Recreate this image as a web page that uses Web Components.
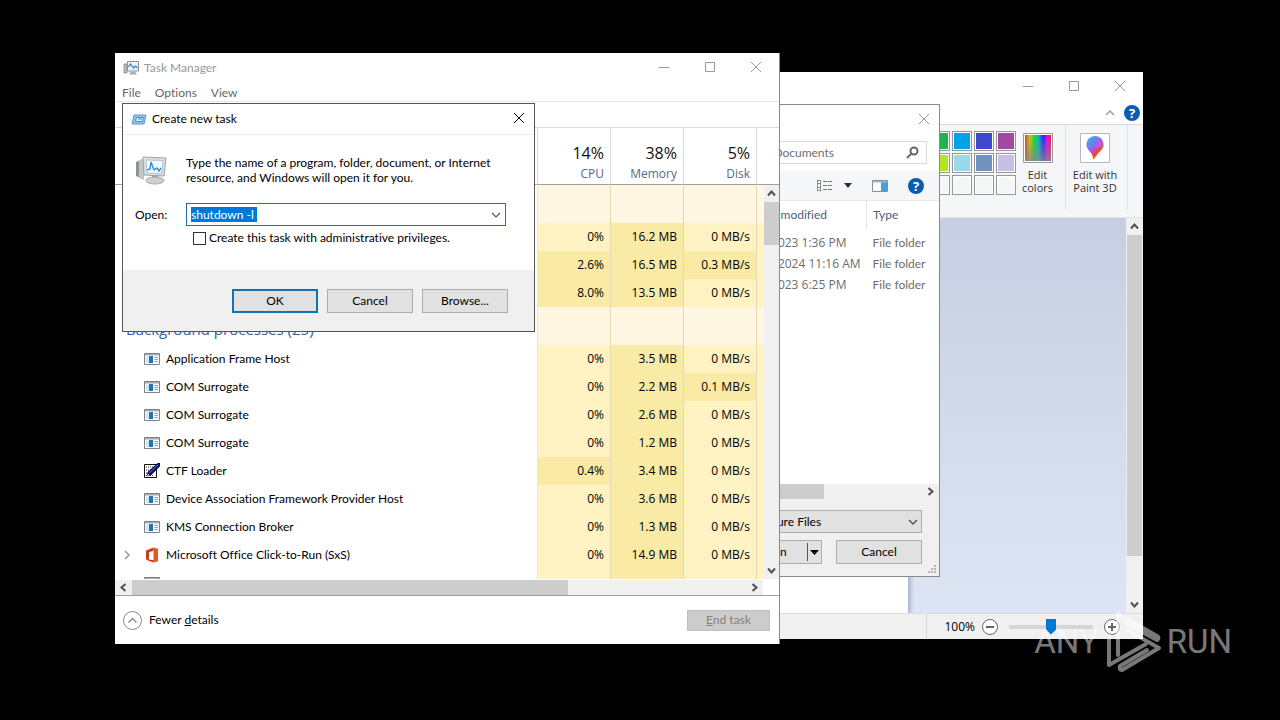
<!DOCTYPE html>
<html lang="en">
<head>
<meta charset="utf-8">
<meta name="viewport" content="width=device-width, initial-scale=1">
<title>Desktop</title>
<style>
  body {
    margin: 0;
    background: #000;
    font: 12px/16px Lato, "Open Sans", sans-serif;
    font-variant-ligatures: none;
    color: #000;
  }
  /* free-floating windows on the desktop */
  paint-app { top: 72px; left: 300px; right: 137px; bottom: 81px; }
  open-dialog { top: 104px; left: 360px; right: 340px; bottom: 143px; }
  task-manager { top: 53px; left: 115px; right: 500px; bottom: 76px; }
  create-task { top: 103px; left: 122px; right: 745px; }
  any-run-mark { right: 48px; bottom: 46px; }
</style>
</head>
<body>
<desk-top>
  <paint-app></paint-app>
  <open-dialog></open-dialog>
  <task-manager></task-manager>
  <create-task></create-task>
  <any-run-mark></any-run-mark>
</desk-top>

<script>
class DeskTop extends HTMLElement {
  connectedCallback() {
    this.attachShadow({ mode: 'open' });
    this.shadowRoot.innerHTML = `
      <style>
        :host { display: block; position: relative; height: 100vh; overflow: hidden; background: #000; }
        ::slotted(*) { position: absolute; }
      </style>
      <slot></slot>
    `;
  }
}
customElements.define('desk-top', DeskTop);

// Title bar with caption buttons. controls="all" adds minimise and maximise.
class TitleBar extends HTMLElement {
  connectedCallback() {
    const all = this.getAttribute('controls') === 'all';
    this.attachShadow({ mode: 'open' });
    this.shadowRoot.innerHTML = `
      <style>
        :host { display: flex; align-items: center; height: 30px; flex: none; background: #fff; color: #999; }
        .name { display: flex; align-items: center; gap: 5px; flex: 1; padding-left: 8px; }
        button { align-self: flex-start; width: 46px; height: 28px; padding: 0; border: 0; background: none; color: inherit; display: grid; place-items: center; }
        :host([active]) { color: #000; }
        :host([compact]) button { width: 30px; }
        svg { width: 12px; height: 12px; fill: none; stroke: currentColor; }
      </style>
      <div class="name"><slot name="icon"></slot><slot></slot></div>
      ${all ? `
        <button aria-label="Minimize"><svg viewBox="0 0 12 12"><path d="M1 6.5h10"/></svg></button>
        <button aria-label="Maximize"><svg viewBox="0 0 12 12"><path d="M1.500 1.500h9v9h-9z"/></svg></button>` : ''}
      <button aria-label="Close"><svg viewBox="0 0 12 12"><path d="M1 1l10 10M11 1L1 11"/></svg></button>
    `;
  }
}
customElements.define('title-bar', TitleBar);

// --size is the length of the thumb as a share of the track
class ScrollBar extends HTMLElement {
  connectedCallback() {
    const across = this.hasAttribute('horizontal');
    this.attachShadow({ mode: 'open' });
    this.shadowRoot.innerHTML = `
      <style>
        :host { display: flex; flex-direction: column; width: 15px; flex: none; background: #f0f0f0; }
        :host([horizontal]) { flex-direction: row; width: auto; height: 15px; }
        button { width: 15px; height: 17px; padding: 0; border: 0; background: none; display: grid; place-items: center; flex: none; }
        :host([horizontal]) button { width: 17px; height: 15px; }
        .track { flex: 1; min-width: 0; min-height: 0; }
        .thumb { background: #cdcdcd; height: var(--size); }
        :host([horizontal]) .thumb { height: 100%; width: var(--size); }
        svg { width: 9px; height: 9px; fill: none; stroke: #505050; stroke-width: 2; }
      </style>
      <button aria-label="Back"><svg viewBox="0 0 9 9"><path d="${across ? 'M6.500 1L2.500 4.500l4 3.500' : 'M1 6.500l3.500-4L8 6.500'}"/></svg></button>
      <div class="track"><div class="thumb"></div></div>
      <button aria-label="Forward"><svg viewBox="0 0 9 9"><path d="${across ? 'M2.500 1l4 3.500-4 3.500' : 'M1 2.500l3.500 4L8 2.500'}"/></svg></button>
    `;
  }
}
customElements.define('scroll-bar', ScrollBar);

class PushButton extends HTMLElement {
  connectedCallback() {
    this.attachShadow({ mode: 'open' });
    this.shadowRoot.innerHTML = `
      <style>
        :host { display: block; width: 86px; flex: none; }
        button { width: 100%; height: 24px; padding: 0; border: 1px solid #adadad; background: #e1e1e1; font: inherit; color: #000; }
        :host([default]) button { border: 2px solid #1272b8; }
        button:disabled { height: 21px; border-color: #bfbfbf; background: #ccc; color: #838383; }
      </style>
      <button ${this.hasAttribute('disabled') ? 'disabled' : ''}><slot></slot></button>
    `;
  }
}
customElements.define('push-button', PushButton);

class HelpButton extends HTMLElement {
  connectedCallback() {
    this.attachShadow({ mode: 'open' });
    this.shadowRoot.innerHTML = `
      <style>
        :host { display: block; }
        button { display: block; width: 16px; height: 16px; padding: 0; border: 0; border-radius: 50%; background: #0a5cb0; color: #fff; font: bold 13px/16px "Open Sans", sans-serif; }
      </style>
      <button aria-label="Help">?</button>
    `;
  }
}
customElements.define('help-button', HelpButton);

class PaintApp extends HTMLElement {
  connectedCallback() {
    const colors = [
      '#22b14c', '#00a2e8', '#3f48cc', '#a349a4',
      '#b5e61d', '#99d9ea', '#7092be', '#c8bfe7',
      '#f5f6f7', '#f5f6f7', '#f5f6f7', '#f5f6f7'
    ];
    this.attachShadow({ mode: 'open' });
    this.shadowRoot.innerHTML = `
      <style>
        :host { display: flex; flex-direction: column; background: #fff; color: #444; }
        .tabs { display: flex; justify-content: flex-end; align-items: center; gap: 9px; height: 22px; padding-right: 3px; border-bottom: 1px solid #dadbdc; }
        .tabs svg { width: 10px; height: 8px; fill: none; stroke: #a0a0a0; stroke-width: 1.5; }
        .tabs button { display: flex; padding: 0; border: 0; background: none; }
        .ribbon { display: flex; justify-content: flex-end; height: 93px; box-sizing: border-box; padding-right: 15px; background: #f5f6f7; border-bottom: 1px solid #dfe3e8; }
        .swatches { display: grid; grid-template-columns: repeat(4, 20px); grid-auto-rows: 20px; gap: 2px; padding-top: 6px; align-content: start; }
        .swatches button { padding: 0; border: 1px solid #979797; box-shadow: inset 0 0 0 1px #fff; }
        .tool { display: flex; flex-direction: column; align-items: center; gap: 5px; margin: 0; padding: 8px 0 0; border: 0; background: none; font: 11px/13px "Open Sans", sans-serif; color: #333; text-align: center; }
        .edit { width: 43px; }
        .p3d { width: 58px; margin-right: 3px; }
        .tool svg { width: 30px; height: 30px; }
        .rule { width: 1px; height: 84px; background: #e0e2e4; }
        .rule.first { margin-left: 6px; }
        .work { flex: 1; min-height: 0; display: flex; }
        .view { flex: 1; display: flex; background: linear-gradient(#c8cee1, #dde5f5); }
        .sheet { flex: 1; margin-right: 218px; background: #fff; box-shadow: 2px 2px 5px #9aa5c6; clip-path: inset(0 -8px 0 0); }
        .bars { display: flex; background: #f0f0f0; padding: 0 1px; }
        .status { display: flex; align-items: center; justify-content: flex-end; gap: 7px; height: 26px; box-sizing: border-box; padding-right: 23px; background: #f0f0f0; border-top: 1px solid #dcdcdc; color: #000; font-family: "Open Sans", sans-serif; }
        .status .line { align-self: stretch; width: 1px; background: #d8d8d8; margin-right: 10px; }
        .round { width: 16px; height: 16px; padding: 0; border: 0; background: none; }
        .round svg { display: block; width: 16px; height: 16px; fill: #fff; stroke: #666; }
        input { appearance: none; width: 84px; height: 18px; margin: 0 4px; background: linear-gradient(#d6d6d6, #d6d6d6) center / 100% 4px no-repeat; }
        input::-webkit-slider-thumb { appearance: none; width: 10px; height: 16px; background: #0078d7; clip-path: polygon(0 0, 100% 0, 100% 70%, 50% 100%, 0 70%); }
      </style>
      <title-bar controls="all"></title-bar>
      <div class="tabs">
        <button aria-label="Minimize the Ribbon"><svg viewBox="0 0 10 8"><path d="M1 6l4-4 4 4"/></svg></button>
        <help-button></help-button>
      </div>
      <div class="ribbon">
        <div class="swatches">
          ${colors.map(c => `<button aria-label="${c}" style="background: ${c}"></button>`).join('')}
        </div>
        <button class="tool edit">
          <svg viewBox="0 0 30 30">
            <defs>
              <linearGradient id="hue"><stop stop-color="#e33"/><stop offset=".18" stop-color="#cc0"/><stop offset=".36" stop-color="#1d3"/><stop offset=".52" stop-color="#0bc"/><stop offset=".7" stop-color="#22f"/><stop offset=".86" stop-color="#e0e"/><stop offset="1" stop-color="#f14"/></linearGradient>
              <linearGradient id="fade" x2="0" y2="1"><stop stop-color="#888" stop-opacity="0"/><stop offset="1" stop-color="#888" stop-opacity=".8"/></linearGradient>
            </defs>
            <path d="M.5.5h29v29H.5z" fill="#fff" stroke="#999"/>
            <path d="M2 2h26v26H2z" fill="url(#hue)"/><path d="M2 2h26v26H2z" fill="url(#fade)"/>
          </svg>
          <span>Edit<br>colors</span>
        </button>
        <div class="rule first"></div>
        <button class="tool p3d">
          <svg viewBox="0 0 30 30">
            <defs>
              <linearGradient id="drop" x1="0" y1="0" x2=".7" y2="1"><stop stop-color="#2bc4f3"/><stop offset=".4" stop-color="#6b7df0"/><stop offset=".58" stop-color="#b94fd8"/><stop offset=".75" stop-color="#f0432f"/><stop offset="1" stop-color="#ffb000"/></linearGradient>
            </defs>
            <path d="M.5.5h29v29H.5z" fill="#fff" stroke="#b8b8b8"/>
            <path d="M15 3c5 0 8.500 4 8.500 8.500 0 4-2.500 6-5 8.500-2 2-2.500 4.500-5.500 6.500 0-3-.5-4.500-2-6.500-2-2.500-4.500-4.500-4.500-8.500C6.500 7 10 3 15 3z" fill="url(#drop)"/>
            <path d="M17 4c4 1 6 4.500 6 8-1 3-4 4-6 3-3-2-3-8 0-11z" fill="#a66bea" opacity=".6"/>
          </svg>
          <span>Edit with<br>Paint 3D</span>
        </button>
        <div class="rule"></div>
      </div>
      <div class="work">
        <div class="view"><div class="sheet"></div></div>
        <div class="bars"><scroll-bar style="--size: 89%"></scroll-bar></div>
      </div>
      <div class="status">
        <div class="line"></div>
        <label for="zoom">100%</label>
        <button class="round" aria-label="Zoom out"><svg viewBox="0 0 16 16"><circle cx="8" cy="8" r="7.500"/><path d="M4 8h8" stroke-width="2"/></svg></button>
        <input id="zoom" type="range" min="0" max="100" value="50">
        <button class="round" aria-label="Zoom in"><svg viewBox="0 0 16 16"><circle cx="8" cy="8" r="7.500"/><path d="M4 8h8M8 4v8" stroke-width="2"/></svg></button>
      </div>
    `;
  }
}
customElements.define('paint-app', PaintApp);

class OpenDialog extends HTMLElement {
  connectedCallback() {
    this.attachShadow({ mode: 'open' });
    this.shadowRoot.innerHTML = `
      <style>
        :host { display: flex; flex-direction: column; box-sizing: border-box; border: 1px solid #8a8a8a; background: #fff; }
        .search { display: flex; justify-content: flex-end; padding: 6px 12px 7px; }
        .box { display: flex; align-items: center; width: 200px; height: 23px; box-sizing: border-box; border: 1px solid #d9d9d9; padding: 0 7px; }
        .box input { flex: 1; min-width: 0; padding: 0; border: 0; outline: 0; background: none; font: inherit; }
        .box input::placeholder { color: #6d6d6d; }
        .box svg { width: 13px; height: 13px; fill: none; stroke: #666; stroke-width: 2; }
        .tools { display: flex; align-items: center; justify-content: flex-end; height: 29px; padding-right: 15px; background: #f5f6f7; border-bottom: 1px solid #e8e8e8; }
        .tools button { display: flex; align-items: center; gap: 10px; padding: 0; border: 0; background: none; margin-right: 20px; }
        table { width: 100%; table-layout: fixed; border-collapse: collapse; color: #6d6d6d; }
        th { height: 27px; padding: 0 0 0 6px; border-left: 1px solid #e5e5e5; font-weight: normal; text-align: left; color: #4c607a; }
        thead th:first-child { border: 0; }
        td { height: 21px; padding: 0 0 0 6px; white-space: nowrap; }
        td:nth-child(2) { padding-left: 3px; font-family: "Open Sans", sans-serif; }
        .date { width: 114px; }
        .type { width: 66px; }
        thead::after { content: ""; display: block; height: 4px; }
        .list { flex: 1; min-height: 0; overflow: hidden; }
        .foot { display: flex; flex-direction: column; gap: 7px; padding: 11px 17px 12px; background: #f0f0f0; }
        .row { display: flex; justify-content: flex-end; gap: 14px; }
        select { appearance: none; width: 187px; height: 23px; padding: 0 4px; border: 1px solid #adadad; border-radius: 0; background: #e1e1e1; color: #000; font: inherit; }
        .pick { position: relative; }
        .pick svg { position: absolute; right: 4px; top: 8px; width: 10px; height: 8px; fill: none; stroke: #555; stroke-width: 1.500; pointer-events: none; }
        .split { display: flex; width: 86px; height: 24px; box-sizing: border-box; border: 1px solid #adadad; background: #e1e1e1; }
        .split button { flex: 1; padding: 0; border: 0; background: none; font: inherit; color: #000; }
        .split .more { flex: none; width: 14px; margin: 2px 0; border-left: 1px solid #555; display: grid; place-items: center; }
        .more svg { width: 9px; height: 5px; }
        .grip { position: absolute; right: 2px; bottom: 2px; width: 9px; height: 9px; fill: #b5b5b5; }
      </style>
      <title-bar compact></title-bar>
      <div class="search">
        <div class="box">
          <input type="text" placeholder="Search Documents" aria-label="Search Documents">
          <svg viewBox="0 0 13 13"><circle cx="8" cy="5" r="3.500"/><path d="M5.500 7.500L1 12"/></svg>
        </div>
      </div>
      <div class="tools">
        <button aria-label="Change your view">
          <svg width="18" height="13" viewBox="0 0 18 13" fill="none" stroke="#777"><path d="M1.500 1v11M4.500 1v11M1 1.500h4M1 4.500h4M1 8.500h4M1 11.500h4" stroke-width=".8"/><path d="M7 2.500h4M12 2.500h4M7 6.500h4M12 6.500h4M7 10.500h4M12 10.500h4"/></svg>
          <svg width="8" height="5" viewBox="0 0 8 5"><path d="M0 0h8L4 5z" fill="#1e2d4a"/></svg>
        </button>
        <button aria-label="Preview pane">
          <svg width="16" height="12" viewBox="0 0 16 12"><path d="M.5.5h15v11H.5z" fill="#fff" stroke="#7f8fa3"/><path d="M9 2h6v9H9z" fill="#4aa0dc"/><path d="M1 1h14v1.500H1z" fill="#a9b9c9"/></svg>
        </button>
        <help-button></help-button>
      </div>
      <div class="list">
        <table>
          <thead><tr><th></th><th class="date">Date modified</th><th class="type">Type</th></tr></thead>
          <tbody>
            <tr><td></td><td>5/3/2023 1:36 PM</td><td>File folder</td></tr>
            <tr><td></td><td>1/23/2024 11:16 AM</td><td>File folder</td></tr>
            <tr><td></td><td>5/3/2023 6:25 PM</td><td>File folder</td></tr>
          </tbody>
        </table>
      </div>
      <scroll-bar horizontal style="--size: 82%"></scroll-bar>
      <div class="foot">
        <div class="row">
          <div class="pick">
            <select aria-label="File type"><option>All Picture Files</option></select>
            <svg viewBox="0 0 10 8"><path d="M1 2l4 4 4-4"/></svg>
          </div>
        </div>
        <div class="row">
          <div class="split">
            <button>Open</button>
            <button class="more" aria-label="More open options"><svg viewBox="0 0 9 5"><path d="M0 0h9L4.500 5z"/></svg></button>
          </div>
          <push-button>Cancel</push-button>
        </div>
      </div>
      <svg class="grip" viewBox="0 0 9 9"><path d="M6 0h2v2H6zM3 3h2v2H3zM6 3h2v2H6zM0 6h2v2H0zM3 6h2v2H3zM6 6h2v2H6z"/></svg>
    `;
  }
}
customElements.define('open-dialog', OpenDialog);

class AppIcon extends HTMLElement {
  connectedCallback() {
    const icons = {
      exe: `<path d="M.5 2.500h15v11H.5z" fill="#fff" stroke="#7a8288"/><path d="M1 3h14v1.500H1z" fill="#a5adb3"/><path d="M2 6h3v6H2z" fill="#cfe6f5"/><path d="M5 5h4v7H5z" fill="#1f74b5"/><path d="M10.500 6.500h3.500M10.500 8.500h3.500M10.500 10.500h3.500" stroke="#7ba3c4"/>`,
      ctf: `<path d="M.5 1.500h12v13H.5z" fill="#fff" stroke="#111"/><path d="M2 4h9M2 7h7M2 10h5M2 12.500h8" stroke="#333" stroke-dasharray="1 1"/><path d="M3 13l1-4L14 0h2v3L7 12z" fill="#0a1278" stroke="#000" stroke-width=".6"/><path d="M5 10l9-8" stroke="#5a6be0"/><path d="M3 13l1-2 1.500 1.200z" fill="#fff"/>`,
      office: `<path d="M9.500.5L2 3.500v9.200l3-1.500V5.200l4.500-1.400z" fill="#c8401a"/><path d="M9.500.5l4.500 1.300v12.400l-4.500 1.300z" fill="#ea5426"/><path d="M2 12.700l7.500 2.800v-2.300L5 12.600v-1.400z" fill="#d92c12"/>`
    };
    this.attachShadow({ mode: 'open' });
    this.shadowRoot.innerHTML = `
      <style>
        :host { display: block; width: 16px; height: 16px; flex: none; }
        svg { display: block; }
      </style>
      <svg width="16" height="16" viewBox="0 0 16 16">${icons[this.getAttribute('kind')]}</svg>
    `;
  }
}
customElements.define('app-icon', AppIcon);

class TaskManager extends HTMLElement {
  connectedCallback() {
    // [icon, name, cpu, memory, disk]
    const apps = [
      ['', '', '0%', '16.2 MB', '0 MB/s'],
      ['', '', '2.6%', '16.5 MB', '0.3 MB/s'],
      ['', '', '8.0%', '13.5 MB', '0 MB/s']
    ];
    const background = [
      ['exe', 'Application Frame Host', '0%', '3.5 MB', '0 MB/s'],
      ['exe', 'COM Surrogate', '0%', '2.2 MB', '0.1 MB/s'],
      ['exe', 'COM Surrogate', '0%', '2.6 MB', '0 MB/s'],
      ['exe', 'COM Surrogate', '0%', '1.2 MB', '0 MB/s'],
      ['ctf', 'CTF Loader', '0.4%', '3.4 MB', '0 MB/s'],
      ['exe', 'Device Association Framework Provider Host', '0%', '3.6 MB', '0 MB/s'],
      ['exe', 'KMS Connection Broker', '0%', '1.3 MB', '0 MB/s'],
      ['office', 'Microsoft Office Click-to-Run (SxS)', '0%', '14.9 MB', '0 MB/s'],
      ['exe', '', '', '', '']
    ];
    const busy = v => (parseFloat(v) > 0 ? 'hot' : '');
    const row = ([icon, name, cpu, mem, disk]) => `
      <tr>
        <td class="name"><div>
          <span class="arrow">${icon === 'office' ? '<svg width="7" height="10" viewBox="0 0 7 10"><path d="M1 1l4 4-4 4" fill="none" stroke="#999" stroke-width="1.500"/></svg>' : ''}</span>
          ${icon ? `<app-icon kind="${icon}"></app-icon>` : ''}${name}
        </div></td>
        <td class="${busy(cpu)}">${cpu}</td><td class="hot">${mem}</td><td class="${busy(disk)}">${disk}</td><td></td>
      </tr>`;
    const group = name => `<tr class="group"><td class="name">${name}</td><td></td><td></td><td></td><td></td></tr>`;

    this.attachShadow({ mode: 'open' });
    this.shadowRoot.innerHTML = `
      <style>
        :host { display: flex; flex-direction: column; box-sizing: border-box; background: #fff; border-right: 1px solid #8a8a8a; }
        nav { display: flex; gap: 14px; height: 17px; padding: 1px 7px 0; border-bottom: 1px solid #e6e6e6; }
        nav button { padding: 0; border: 0; background: none; font: inherit; color: #666; }
        .tabs { height: 25px; border-bottom: 1px solid #d9d9d9; flex: none; }
        .main { flex: 1; min-height: 0; display: grid; grid-template-columns: 1fr 15px; grid-template-rows: 57px 1fr; }
        .list { grid-row: 1 / 3; overflow: hidden; }
        .main scroll-bar { grid-column: 2; }
        .corner { border-bottom: 1px solid #9f9f9f; }
        table { width: 100%; table-layout: fixed; border-collapse: separate; border-spacing: 0; font-family: "Open Sans", sans-serif; }
        th, td { box-sizing: border-box; padding: 0 6px 0 0; text-align: right; font-weight: normal; white-space: nowrap; border-right: 1px solid #e3d9ae; }
        th { height: 57px; border-right-color: #dcdcdc; border-bottom: 1px solid #9f9f9f; color: #5a6987; line-height: 20px; vertical-align: bottom; }
        th b { display: block; font-weight: normal; font-size: 16px; color: #111; line-height: 21px; }
        th:last-child, td:last-child { border-right: 0; padding: 0; }
        td { height: 28px; background: #fff3c4; }
        td.hot { background: #f9eba5; }
        td.name { background: #fff; text-align: left; border-right: 1px solid #f0e6bd; font-family: Lato, sans-serif; }
        td.name div { display: flex; align-items: center; gap: 6px; }
        .arrow { width: 14px; padding-left: 9px; flex: none; line-height: 10px; }
        .group td { height: 38px; background: #fff7e1; }
        .group td.name { padding: 6px 0 0 11px; background: #fff; font: 15px/20px "Open Sans", sans-serif; color: #31609f; }
        .num { width: 73px; }
        .rest { width: 7px; }
        .side { padding-right: 16px; padding-top: 1px; border-bottom: 1px solid #9f9f9f; }
        footer { display: flex; align-items: center; justify-content: space-between; height: 48px; padding: 0 9px 0 8px; }
        footer button { display: flex; align-items: center; gap: 7px; padding: 0; border: 0; background: none; font: inherit; }
        footer push-button { width: 83px; }
      </style>
      <title-bar controls="all">
        <svg slot="icon" width="16" height="16" viewBox="0 0 16 16"><path d="M1 4h3v9H1z" fill="#b9bdc2" stroke="#85898e" stroke-width=".8"/><path d="M4.500 1.500h11v9.500h-11z" fill="#e6f3fc" stroke="#8d9399"/><path d="M5.500 7l2-3 3 4 2-2 2 2" fill="none" stroke="#2a83c4" stroke-width="1.200"/><path d="M8 11.500h4l2 3H6z" fill="#a9adb2"/></svg>
        Task Manager
      </title-bar>
      <nav><button>File</button><button>Options</button><button>View</button></nav>
      <div class="tabs"></div>
      <div class="main">
        <div class="list">
          <table>
            <thead><tr>
              <th></th>
              <th class="num"><b>14%</b>CPU</th>
              <th class="num"><b>38%</b>Memory</th>
              <th class="num"><b>5%</b>Disk</th>
              <th class="rest"></th>
            </tr></thead>
            <tbody>
              ${group('')}
              ${apps.map(row).join('')}
              ${group('Background processes (25)')}
              ${background.map(row).join('')}
            </tbody>
          </table>
        </div>
        <div class="corner"></div>
        <scroll-bar style="--size: 12%"></scroll-bar>
      </div>
      <div class="side"><scroll-bar horizontal style="--size: 71%"></scroll-bar></div>
      <footer>
        <button>
          <svg width="19" height="19" viewBox="0 0 19 19" fill="none" stroke="#888"><circle cx="9.500" cy="9.500" r="9"/><path d="M5.500 11.500l4-4 4 4" stroke-width="1.300"/></svg>
          <span>Fewer <u>d</u>etails</span>
        </button>
        <push-button disabled><u>E</u>nd task</push-button>
      </footer>
    `;
  }
}
customElements.define('task-manager', TaskManager);

class CreateTask extends HTMLElement {
  connectedCallback() {
    this.attachShadow({ mode: 'open' });
    this.shadowRoot.innerHTML = `
      <style>
        :host { display: flex; flex-direction: column; box-sizing: border-box; border: 1px solid #555; background: #fff; font-size: 12px; }
        title-bar { border-bottom: 1px solid #ececec; }
        .body { display: grid; grid-template-columns: 51px 1fr; align-items: center; padding: 20px 28px 24px 12px; }
        p { margin: 0 0 18px; line-height: 15px; }
        .pc { margin: 0 0 18px; }
        .combo { display: flex; align-items: center; justify-content: space-between; height: 23px; box-sizing: border-box; padding: 0 4px; border: 1px solid #1a6fb5; }
        .combo input { width: 66px; padding: 0; border: 0; outline: 0; font: inherit; line-height: 15px; height: 15px; background: #0078d7; color: #fff; }
        .combo input::selection { background: #0078d7; color: #fff; }
        .combo button { padding: 0; border: 0; background: none; display: flex; }
        .admin { grid-column: 2; display: flex; align-items: center; gap: 3px; padding: 4px 0 0 7px; }
        .admin input { appearance: none; width: 13px; height: 13px; margin: 0; border: 1px solid #333; background: #fff; }
        .actions { display: flex; justify-content: flex-end; gap: 9px; padding: 19px 26px 18px; background: #f0f0f0; }
      </style>
      <title-bar active compact>
        <svg slot="icon" width="16" height="14" viewBox="0 0 16 14"><path d="M3 3h12l-2 9H1z" fill="#8fc4ea" stroke="#5a9ccb"/><path d="M5.500 5.500h7l-1 4h-7z" fill="#e8f4fc" stroke="#4a8fc4"/><path d="M7 7h4" stroke="#3a7fb4"/></svg>
        Create new task
      </title-bar>
      <div class="body">
        <svg class="pc" width="33" height="30" viewBox="0 0 33 30">
          <path d="M1 7l7-3v20l-7-3z" fill="#8d9094"/><path d="M4 5l5-1v21l-5-2z" fill="#c2c5c8"/>
          <path d="M8 2l23 1-2 18-20-1z" fill="#dcdee0" stroke="#a0a3a6"/>
          <path d="M11 5l17 .5-1.500 13L12 18z" fill="#f3faff" stroke="#b6c4cf"/>
          <path d="M12 15l3-1 1-7 3 8 3-2 2 3 2-3" fill="none" stroke="#2c8fd6" stroke-width="1.400"/>
          <path d="M17 20h6l1 4h-7z" fill="#a2a5a8"/><ellipse cx="20" cy="25.500" rx="9" ry="3.500" fill="#cdcfd1" stroke="#a8abad"/>
        </svg>
        <p>Type the name of a program, folder, document, or Internet resource, and Windows will open it for you.</p>
        <label for="open">Open:</label>
        <div class="combo">
          <input id="open" type="text" value="shutdown -l">
          <button aria-label="Recent commands"><svg width="10" height="8" viewBox="0 0 10 8"><path d="M1 2l4 4 4-4" fill="none" stroke="#555" stroke-width="1.200"/></svg></button>
        </div>
        <label class="admin"><input type="checkbox">Create this task with administrative privileges.</label>
      </div>
      <div class="actions">
        <push-button default>OK</push-button>
        <push-button>Cancel</push-button>
        <push-button>Browse...</push-button>
      </div>
    `;
  }
}
customElements.define('create-task', CreateTask);

class AnyRunMark extends HTMLElement {
  connectedCallback() {
    this.attachShadow({ mode: 'open' });
    this.shadowRoot.innerHTML = `
      <style>
        :host { display: flex; align-items: center; gap: 4px; color: #fff; opacity: .47; font: 33px/64px Roboto, sans-serif; }
        svg { width: 60px; height: 64px; fill: none; stroke: #fff; stroke-width: 4; stroke-linejoin: round; stroke-linecap: round; }
      </style>
      <span>ANY</span>
      <svg viewBox="6 8 60 64" aria-hidden="true">
        <path d="M21 53V12l39 22q3 2 0 4L28 21"/>
        <path d="M12 34v29l37-21"/>
        <path d="M30 28l32 18-37 22q-3 0-2-4l27-16"/>
      </svg>
      <span>RUN</span>
    `;
  }
}
customElements.define('any-run-mark', AnyRunMark);
</script>
</body>
</html>
